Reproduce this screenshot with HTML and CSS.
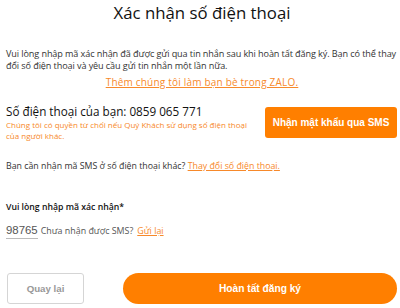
FILE: index.html
```html
<!DOCTYPE html>
<html lang="vi">
<head>
<meta charset="utf-8">
<link rel="stylesheet" href="styles.css">
</head>
<body>
<div class="page">
  <h1 class="title">Xác nhận số điện thoại</h1>
  <p class="intro">Vui lòng nhập mã xác nhận đã được gửi qua tin nhắn sau khi hoàn tất đăng ký. Bạn có thể thay đổi số điện thoại và yêu cầu gửi tin nhắn một lần nữa.</p>
  <div class="zalo"><a class="link" href="#">Thêm chúng tôi làm bạn bè trong ZALO.</a></div>
  <div class="phone-row">
    <div class="phone-info">
      <div class="phone">Số điện thoại của bạn: 0859 065 771</div>
      <div class="note">Chúng tôi có quyền từ chối nếu Quý Khách sử dụng số điện thoại của người khác.</div>
    </div>
    <button class="btn-sms">Nhận mật khẩu qua SMS</button>
  </div>
  <p class="change">Bạn cần nhận mã SMS ở số điện thoại khác? <a class="link" href="#">Thay đổi số điện thoại.</a></p>
  <div class="label">Vui lòng nhập mã xác nhận*</div>
  <div class="code-row">
    <span class="code">98765</span>
    <span class="hint">Chưa nhận được SMS?</span>
    <a class="link resend" href="#">Gửi lại</a>
  </div>
  <div class="actions">
    <button class="btn-back">Quay lại</button>
    <button class="btn-done">Hoàn tất đăng ký</button>
  </div>
</div>
</body>
</html>
```
FILE: styles.css
```css
* { box-sizing: border-box; }
html, body { margin: 0; padding: 0; background: #fff; }
body { font-family: "Open Sans", sans-serif; color: #333; }
.page { padding: 0 2px 0 6px; width: 400px; }
.title {
  margin: 0;
  padding-top: 1px;
  font-size: 16.8px;
  font-weight: 400;
  color: #111;
  text-align: center;
  line-height: 24px;
}
.intro {
  margin: 23px 0 0;
  font-size: 9.1px;
  letter-spacing: -0.1px;
  line-height: 11.5px;
  color: #333;
}
.zalo {
  margin-top: 5px;
  text-align: center;
  font-size: 10px;
  letter-spacing: 0.2px;
  line-height: 13px;
}
.link { color: #f7892a; text-decoration: underline; }
.phone-row {
  margin-top: 14.5px;
  display: flex;
  justify-content: space-between;
  align-items: flex-start;
  padding-right: 1px;
}
.phone-info { width: 250px; }
.phone {
  font-size: 11.7px;
  line-height: 14px;
  color: #111;
}
.note {
  margin-top: 1px;
  font-size: 8px;
  line-height: 11px;
  color: #f7892a;
}
.btn-sms {
  margin-top: 3.5px;
  width: 132px;
  height: 31px;
  border: none;
  border-radius: 3px;
  background: #ff7f00;
  color: #fff;
  font-family: "Liberation Sans", Arial, sans-serif;
  font-weight: 700;
  font-size: 10px;
  padding: 0;
}
.change {
  margin: 20.5px 0 0;
  font-size: 8.8px;
  line-height: 11px;
}
.label {
  margin-top: 30px;
  font-size: 8.7px;
  font-weight: 600;
  line-height: 11px;
  color: #111;
}
.code-row {
  margin-top: 10.5px;
  display: flex;
  align-items: baseline;
}
.code {
  font-family: "Liberation Sans", Arial, sans-serif;
  font-size: 11.4px;
  line-height: 13px;
  color: #555;
  border-bottom: 1px solid #bbb;
  padding-bottom: 1.5px;
  margin-right: 3px;
}
.hint { font-size: 8.9px; line-height: 13px; color: #555; }
.resend { font-size: 8.9px; line-height: 13px; margin-left: 4px; }
.actions {
  margin-top: 34px;
  display: flex;
  gap: 39px;
  padding-left: 1px;
}
.btn-back {
  width: 77px;
  height: 31px;
  border: 1px solid #d5d5d5;
  border-radius: 3px;
  background: #fff;
  color: #999;
  font-family: "Liberation Sans", Arial, sans-serif;
  font-weight: 700;
  font-size: 9.7px;
  padding: 0;
}
.btn-done {
  width: 274px;
  height: 31px;
  border: none;
  border-radius: 16px;
  background: #ff7f00;
  color: #fff;
  font-family: "Liberation Sans", Arial, sans-serif;
  font-weight: 700;
  font-size: 10.2px;
  padding: 0;
}
```
